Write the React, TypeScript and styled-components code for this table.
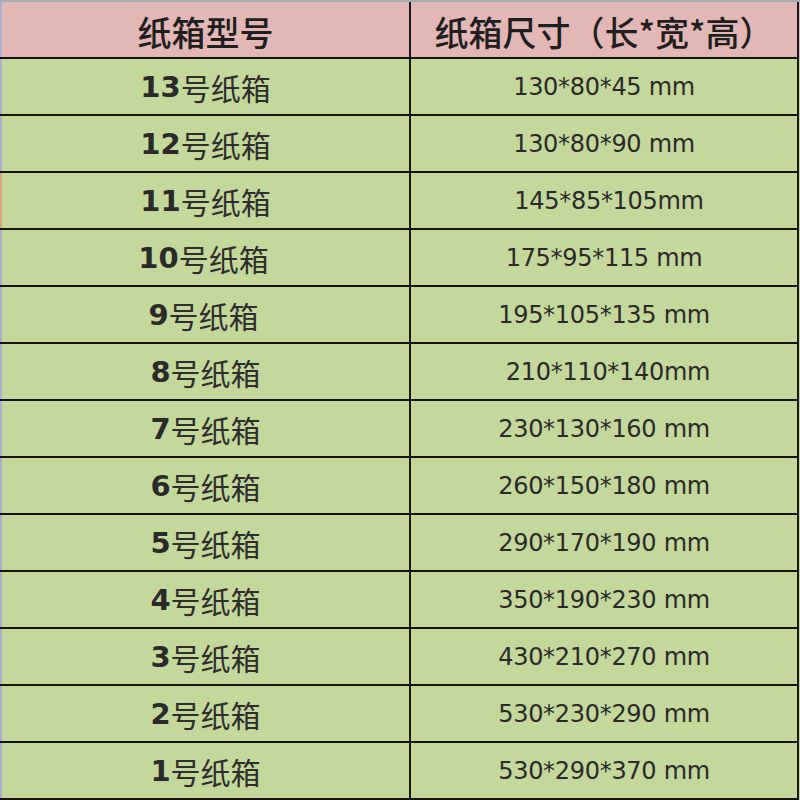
import React from "react";
import styled, { createGlobalStyle } from "styled-components";

const Global = createGlobalStyle`
  html, body { margin: 0; padding: 0; background: #ffffff; }
  * { box-sizing: border-box; }
`;

const Sheet = styled.div`
  width: 800px;
  height: 800px;
  display: flex;
  flex-direction: column;
  border-top: 2px solid #a3acae;
  overflow: hidden;
  background: #c5d89b;
`;

const Row = styled.div<{ $header?: boolean; $edge?: string }>`
  display: grid;
  grid-template-columns: 407px 2px 386px 2px 1px;
  height: 55px;
  background: ${(p) => (p.$header ? "#e4b7b7" : "#c5d89b")};
  border-left: 2px solid ${(p) => p.$edge || "#aeb0cf"};
  flex: 0 0 auto;
`;

const HLine = styled.div`
  height: 2px;
  width: 799px;
  background: #141414;
  flex: 0 0 auto;
`;

const VLine = styled.div`
  background: #1a1a1a;
`;

const Cell = styled.div<{ $shift?: number }>`
  display: flex;
  align-items: center;
  justify-content: center;
  color: #2b2b2b;
  padding-left: ${(p) => (p.$shift && p.$shift > 0 ? p.$shift * 2 : 0)}px;
  padding-right: ${(p) => (p.$shift && p.$shift < 0 ? -p.$shift * 2 : 0)}px;
  white-space: nowrap;
`;

const HeaderText = styled.span`
  font-family: "Noto Sans CJK SC", sans-serif;
  font-size: 34px;
  font-weight: 500;
  color: #1f1f1f;
  padding-top: 4px;
`;

const ModelNum = styled.span`
  font-family: "DejaVu Sans", "Liberation Sans", sans-serif;
  font-weight: 700;
  font-size: 29px;
  color: #2a2a2a;
`;

const ModelCjk = styled.span`
  font-family: "Noto Sans CJK SC", sans-serif;
  font-size: 30px;
  color: #2e2e2e;
`;

const SizeText = styled.span`
  font-family: "DejaVu Sans", "Liberation Sans", sans-serif;
  font-size: 24px;
  color: #2a2a2a;
  letter-spacing: -0.3px;
`;

const rows: { n: string; size: string; shiftL?: number; shiftR?: number; edge?: string }[] = [
  { n: "13", size: "130*80*45 mm" },
  { n: "12", size: "130*80*90 mm" },
  { n: "11", size: "145*85*105mm", shiftR: 5, edge: "#d6a77a" },
  { n: "10", size: "175*95*115 mm", shiftL: -2 },
  { n: "9", size: "195*105*135 mm", shiftL: -2 },
  { n: "8", size: "210*110*140mm", shiftR: 4 },
  { n: "7", size: "230*130*160 mm" },
  { n: "6", size: "260*150*180 mm" },
  { n: "5", size: "290*170*190 mm" },
  { n: "4", size: "350*190*230 mm" },
  { n: "3", size: "430*210*270 mm" },
  { n: "2", size: "530*230*290 mm" },
  { n: "1", size: "530*290*370 mm" },
];

export default function App() {
  return (
    <>
      <Global />
      <Sheet>
        <Row $header>
          <Cell>
            <HeaderText>纸箱型号</HeaderText>
          </Cell>
          <VLine />
          <Cell>
            <HeaderText>纸箱尺寸（长*宽*高）</HeaderText>
          </Cell>
          <VLine />
          <div />
        </Row>
        <HLine />
        {rows.map((r) => (
          <React.Fragment key={r.n}>
            <Row $edge={r.edge}>
              <Cell $shift={r.shiftL}>
                <ModelNum>{r.n}</ModelNum>
                <ModelCjk>号纸箱</ModelCjk>
              </Cell>
              <VLine />
              <Cell $shift={r.shiftR}>
                <SizeText>{r.size}</SizeText>
              </Cell>
              <VLine />
              <div />
            </Row>
            <HLine />
          </React.Fragment>
        ))}
      </Sheet>
    </>
  );
}
